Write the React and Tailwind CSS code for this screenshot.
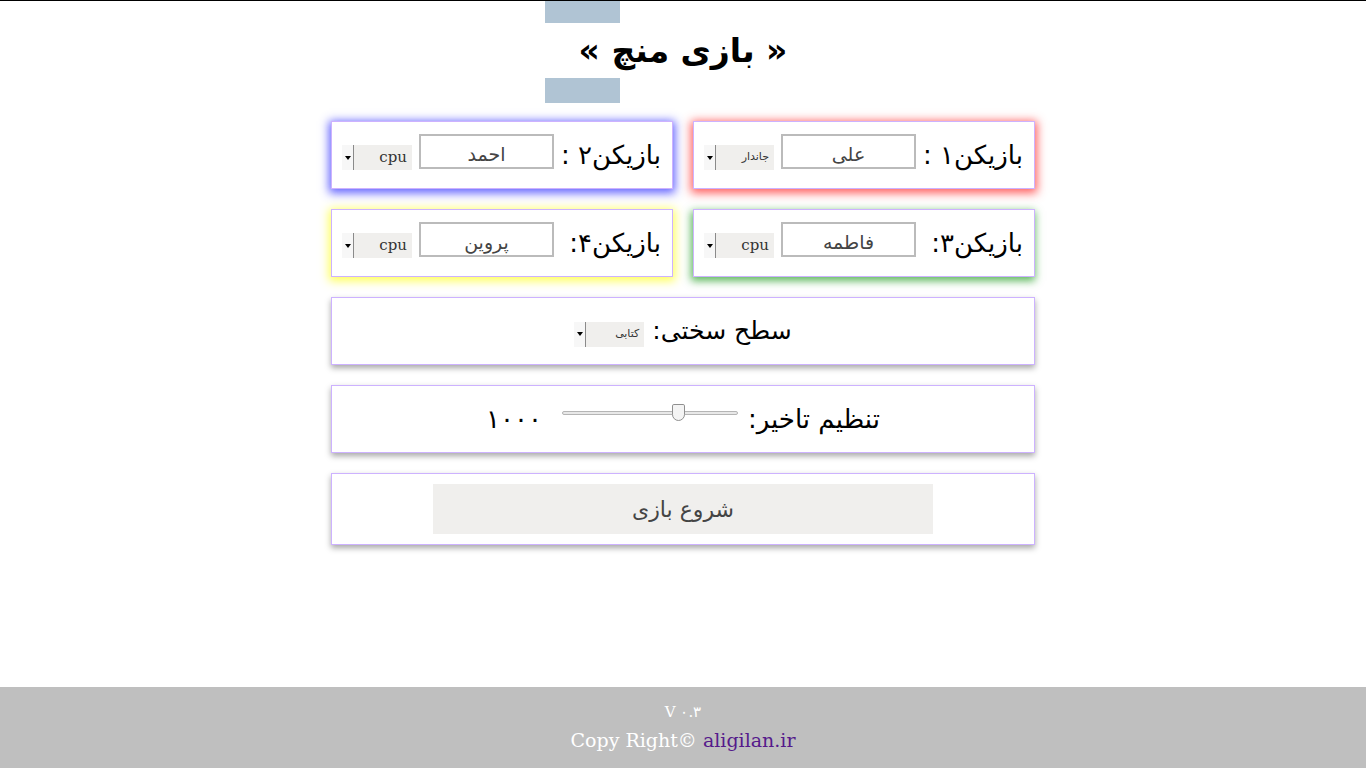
import React from 'react'

const fa = { fontFamily: '"DejaVu Sans", "Noto Sans", sans-serif' }
const serif = { fontFamily: '"DejaVu Serif", "Liberation Serif", serif' }

function FakeSelect({ label, small, className = '' }) {
  return (
    <div className={`flex h-[25px] w-[70px] shrink-0 items-stretch bg-[#f0efed] ${className}`} dir="ltr">
      <div className="flex w-[12px] items-center justify-center border-r border-[#8a8a8a] bg-[#f7f7f7]">
        <div className="h-0 w-0 border-x-[3px] border-t-[4px] border-x-transparent border-t-black" />
      </div>
      <div
        className={`flex flex-1 items-center justify-end pr-[5px] text-[#333] ${small ? 'text-[11px]' : 'text-[15px]'}`}
        style={small ? fa : serif}
      >
        {label}
      </div>
    </div>
  )
}

function PlayerCard({ label, name, mode, shadow }) {
  return (
    <div className={`flex h-[68px] items-start border border-[#cdb2ff] bg-white pr-[11px] pl-[10px] ${shadow}`}>
      <span className="self-center whitespace-nowrap text-[26px] text-black" style={fa}>{label}</span>
      <div className="mt-[12px] mr-auto ml-[7px] flex h-[35px] w-[135px] shrink-0 items-center justify-center border-2 border-[#bbb] pt-[5px] text-[19px] text-[#444]" style={fa}>
        {name}
      </div>
      <FakeSelect label={mode} small={mode !== 'cpu'} className="mt-[23px]" />
    </div>
  )
}

export default function App() {
  return (
    <div dir="rtl" className="flex min-h-[768px] flex-col border-t border-black bg-white" style={fa}>
      <div className="flex flex-1 flex-col items-center">
        <div className="flex w-full flex-col" dir="ltr">
          <div className="ml-[545px] h-[22px] w-[75px] bg-[#b0c4d4]" />
          <h1 className="py-[8px] text-center text-[33px] font-bold leading-[39px] text-black" style={fa}>« بازی منچ »</h1>
          <div className="ml-[545px] h-[25px] w-[75px] bg-[#b0c4d4]" />
        </div>

        <div className="mt-[18px] grid w-[704px] grid-cols-2 gap-[20px]">
          <PlayerCard label="بازیکن۱ :" name="علی" mode="جاندار" shadow="shadow-[0_2px_9px_2px_rgba(255,40,40,0.75)]" />
          <PlayerCard label="بازیکن۲ :" name="احمد" mode="cpu" shadow="shadow-[0_2px_9px_2px_rgba(70,70,255,0.85)]" />
          <PlayerCard label="بازیکن۳:" name="فاطمه" mode="cpu" shadow="shadow-[-1px_3px_8px_1px_rgba(40,160,40,0.75)]" />
          <PlayerCard label="بازیکن۴:" name="پروین" mode="cpu" shadow="shadow-[0_2px_9px_2px_rgba(255,255,60,0.85)]" />
        </div>

        <div className="mt-[20px] flex w-[704px] flex-col gap-[20px]">
          <div className="flex h-[68px] items-center justify-center gap-[8px] border border-[#cdb2ff] bg-white shadow-[0_3px_6px_rgba(0,0,0,0.35)]">
            <span className="text-[25px] text-black">سطح سختی:</span>
            <FakeSelect label="کتابی" small className="mt-[6px]" />
          </div>

          <div className="flex h-[68px] items-center justify-center gap-[10px] border border-[#cdb2ff] bg-white shadow-[0_3px_6px_rgba(0,0,0,0.35)]">
            <span className="text-[26px] text-black">تنظیم تاخیر:</span>
            <div className="relative mb-[12px] h-[4px] w-[176px] rounded-full border border-[#b5b5b5] bg-[#e8e8e8]" dir="ltr">
              <div className="absolute left-[109px] top-[-8px] h-[17px] w-[13px] rounded-b-[7px] rounded-t-[2px] border border-[#8f8f8f] bg-[#f4f4f4]" />
            </div>
            <span className="mr-[10px] text-[26px] tracking-[10px] text-black">۱۰۰۰</span>
          </div>

          <div className="flex h-[72px] items-center justify-center border border-[#cdb2ff] bg-white shadow-[0_3px_6px_rgba(0,0,0,0.35)]">
            <div className="flex h-[50px] w-[500px] items-center justify-center bg-[#f0efed] text-[22px] text-[#444]">شروع بازی</div>
          </div>
        </div>
      </div>

      <footer className="flex h-[81px] flex-col items-center justify-center gap-[2px] bg-[#bfbfbf] text-white" style={serif}>
        <div className="text-[15px]" dir="ltr">V ۰.۳</div>
        <div className="text-[19px]" dir="ltr">
          Copy Right© <span className="text-[#551a8b]">aligilan.ir</span>
        </div>
      </footer>
    </div>
  )
}
